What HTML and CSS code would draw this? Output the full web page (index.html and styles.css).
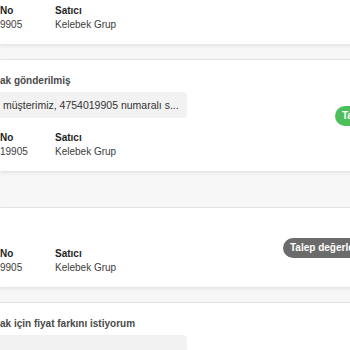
FILE: index.html
```html
<!DOCTYPE html>
<html lang="tr">

<head>
    <meta charset="UTF-8">
    <meta name="viewport" content="width=device-width, initial-scale=1.0">
    <title>Talepler</title>
    <link rel="stylesheet" href="styles.css">
</head>

<body>
    <div class="list">
        <div class="card">
            <div class="card-title">ak eksik gönderilmiş</div>
            <div class="bubble">müşterimiz, talebiniz alınmıştır...</div>
            <div class="meta">
                <div class="meta-col order">
                    <span class="meta-label">No</span>
                    <span class="meta-value">9905</span>
                </div>
                <div class="meta-col">
                    <span class="meta-label">Satıcı</span>
                    <span class="meta-value">Kelebek Grup</span>
                </div>
            </div>
        </div>

        <div class="card">
            <div class="card-title">ak gönderilmiş</div>
            <div class="bubble">müşterimiz, 4754019905 numaralı s...</div>
            <div class="meta">
                <div class="meta-col order">
                    <span class="meta-label">No</span>
                    <span class="meta-value">19905</span>
                </div>
                <div class="meta-col">
                    <span class="meta-label">Satıcı</span>
                    <span class="meta-value">Kelebek Grup</span>
                </div>
            </div>
            <span class="status status-done status-a">Talep sonuçlandı</span>
        </div>

        <div class="card card-plain">
            <div class="meta">
                <div class="meta-col order">
                    <span class="meta-label">No</span>
                    <span class="meta-value">9905</span>
                </div>
                <div class="meta-col">
                    <span class="meta-label">Satıcı</span>
                    <span class="meta-value">Kelebek Grup</span>
                </div>
            </div>
            <span class="status status-wait status-b">Talep değerlendiriliyor</span>
        </div>

        <div class="card">
            <div class="card-title">ak için fiyat farkını istiyorum</div>
            <div class="bubble bubble-tall">müşterimiz, 4754019905 numaralı s...</div>
            <div class="meta">
                <div class="meta-col order">
                    <span class="meta-label">No</span>
                    <span class="meta-value">9905</span>
                </div>
                <div class="meta-col">
                    <span class="meta-label">Satıcı</span>
                    <span class="meta-value">Kelebek Grup</span>
                </div>
            </div>
        </div>
    </div>
</body>

</html>
```

FILE: styles.css
```css
* {
    margin: 0;
    padding: 0;
    box-sizing: border-box;
}

body {
    background: #f7f7f7;
    font-family: "Liberation Sans", Arial, sans-serif;
    font-size: 10px;
    line-height: 14px;
    color: #333;
    overflow: hidden;
    height: 100vh;
}

.list {
    display: flex;
    flex-direction: column;
    gap: 15px;
    width: 480px;
    margin-top: -68px;
}

.card {
    position: relative;
    background: #fff;
    border-top: 1px solid #e2e2e2;
    box-shadow: 0 2px 3px rgba(0, 0, 0, 0.08);
    padding: 14px 0 12px;
}

.card-plain {
    margin-top: 21px;
    padding-top: 39px;
}

.card-title {
    font-weight: 700;
    color: #4a4a4a;
}

.bubble {
    display: inline-block;
    margin-top: 4px;
    padding: 6px 8px 6px 3px;
    background: #f2f2f2;
    border-radius: 0 4px 4px 0;
    font-size: 10.5px;
    color: #333;
}

.bubble-tall {
    padding-top: 14px;
}

.meta {
    display: flex;
    margin-top: 13px;
}

.card-plain .meta {
    margin-top: 0;
}

.meta-col {
    display: flex;
    flex-direction: column;
}

.order {
    width: 55px;
}

.meta-label {
    font-weight: 700;
    color: #1f1f1f;
}

.meta-value {
    color: #3d3d3d;
}

.status {
    position: absolute;
    padding: 3px 8px;
    border-radius: 10px;
    color: #fff;
    font-weight: 700;
    white-space: nowrap;
}

.status-done {
    background: #4cbf5a;
}

.status-wait {
    background: #6b6b6b;
}

.status-a {
    top: 46px;
    left: 335px;
    padding-left: 7px;
}

.status-b {
    top: 30px;
    left: 283px;
    padding-left: 7px;
}
```
